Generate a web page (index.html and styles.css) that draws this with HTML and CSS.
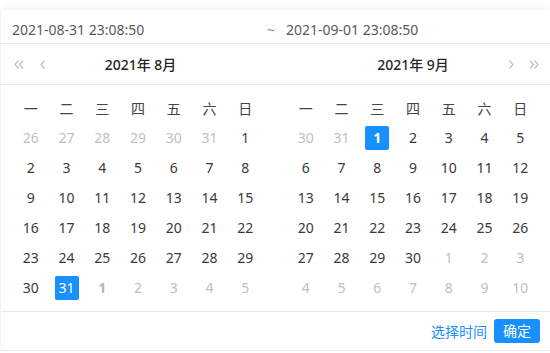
FILE: index.html
```html
<!DOCTYPE html>
<html lang="zh-CN">
<head>
  <meta charset="UTF-8">
  <meta name="viewport" content="width=device-width, initial-scale=1.0">
  <title>Range Picker</title>
  <link rel="stylesheet" href="styles.css">
</head>
<body>
  <div class="picker">
    <div class="range-input">
      <span class="range-value">2021-08-31 23:08:50</span>
      <span class="range-sep">~</span>
      <span class="range-value">2021-09-01 23:08:50</span>
    </div>

    <div class="panels">
      <div class="date-panel">
        <div class="panel-header">
          <button class="nav-btn">
            <svg width="10" height="9" viewBox="0 0 10 9"><path d="M4.5 0.5 L1 4.5 L4.5 8.5 M9 0.5 L5.5 4.5 L9 8.5" fill="none" stroke="#bfbfbf" stroke-width="1.2"/></svg>
          </button>
          <button class="nav-btn">
            <svg width="5" height="9" viewBox="0 0 5 9"><path d="M4.5 0.5 L1 4.5 L4.5 8.5" fill="none" stroke="#bfbfbf" stroke-width="1.2"/></svg>
          </button>
          <div class="panel-title">2021年 8月</div>
          <span class="nav-spacer"></span>
        </div>
        <div class="panel-body" id="left-body"></div>
      </div>

      <div class="date-panel">
        <div class="panel-header">
          <span class="nav-spacer"></span>
          <div class="panel-title">2021年 9月</div>
          <button class="nav-btn">
            <svg width="5" height="9" viewBox="0 0 5 9"><path d="M0.5 0.5 L4 4.5 L0.5 8.5" fill="none" stroke="#bfbfbf" stroke-width="1.2"/></svg>
          </button>
          <button class="nav-btn">
            <svg width="10" height="9" viewBox="0 0 10 9"><path d="M1 0.5 L4.5 4.5 L1 8.5 M5.5 0.5 L9 4.5 L5.5 8.5" fill="none" stroke="#bfbfbf" stroke-width="1.2"/></svg>
          </button>
        </div>
        <div class="panel-body" id="right-body"></div>
      </div>
    </div>

    <div class="panel-footer">
      <a class="time-link" href="#">选择时间</a>
      <button class="ok-btn">确定</button>
    </div>
  </div>

  <script>
    const weekdays = ['一', '二', '三', '四', '五', '六', '日'];

    // prev-month tail, month length, selected day, bold mark in next month
    function buildMonth(prevDays, monthLength, selected, endMark) {
      const days = [];
      prevDays.forEach(d => days.push({ n: d, out: true }));
      for (let d = 1; d <= monthLength; d++) days.push({ n: d, out: false });
      let next = 1;
      while (days.length < 42) days.push({ n: next++, out: true });
      days.forEach((day, i) => {
        if (!day.out && day.n === selected) day.selected = true;
        if (endMark && day.out && i > 20 && day.n === endMark) day.mark = true;
      });
      return days;
    }

    function renderPanel(id, days, boldSelected) {
      const body = document.getElementById(id);
      weekdays.forEach(w => {
        const th = document.createElement('div');
        th.className = 'weekday';
        th.textContent = w;
        body.appendChild(th);
      });
      days.forEach(day => {
        const cell = document.createElement('div');
        cell.className = 'cell';
        if (day.out) cell.classList.add('out');
        if (day.mark) cell.classList.add('mark');
        const inner = document.createElement('span');
        inner.className = 'cell-inner';
        if (day.selected) {
          inner.classList.add('selected');
          if (boldSelected) inner.classList.add('bold');
        }
        inner.textContent = day.n;
        cell.appendChild(inner);
        body.appendChild(cell);
      });
    }

    renderPanel('left-body', buildMonth([26, 27, 28, 29, 30, 31], 31, 31, 1), false);
    renderPanel('right-body', buildMonth([30, 31], 30, 1, null), true);
  </script>
</body>
</html>
```

FILE: styles.css
```css
html, body {
  margin: 0;
  padding: 0;
  background: #ffffff;
  overflow: hidden;
}
body {
  font-family: "Noto Sans", "Noto Sans CJK SC", sans-serif;
  font-size: 14px;
  color: rgba(0, 0, 0, 0.85);
}
.picker {
  width: 551px;
  margin: 10px 0 0 1px;
  background: #fff;
  border-radius: 2px;
  box-shadow: 0 -2px 8px rgba(0, 0, 0, 0.06), 0 1px 2px rgba(0, 0, 0, 0.08);
}
.range-input {
  display: flex;
  align-items: center;
  height: 34px;
  padding: 6px 11px 0;
  box-sizing: border-box;
  border-bottom: 1px solid #e8e8e8;
  line-height: 22px;
  color: #595959;
}
.range-value {
  width: 256px;
}
.range-sep {
  width: 19px;
  color: #8c8c8c;
}
.panels {
  display: flex;
}
.date-panel {
  width: 275px;
}
.panel-header {
  display: flex;
  align-items: center;
  height: 40px;
  padding: 0 10px 0 12px;
  border-bottom: 1px solid #e8e8e8;
}
.date-panel + .date-panel .panel-header {
  padding: 0 11px 0 12px;
}
.nav-btn {
  display: flex;
  align-items: center;
  justify-content: center;
  border: none;
  background: none;
  padding: 0;
  height: 20px;
  min-width: 12px;
  margin-right: 11px;
  cursor: pointer;
}
.date-panel + .date-panel .nav-btn {
  margin-right: 0;
  margin-left: 11px;
}
.nav-spacer {
  width: 44px;
}
.panel-title {
  flex: 1;
  text-align: center;
  font-weight: 500;
  color: #262626;
}
.panel-body {
  display: grid;
  grid-template-columns: repeat(7, 1fr);
  width: 250px;
  padding: 8px 13px 8px 12px;
}
.weekday,
.cell {
  height: 30px;
  display: flex;
  align-items: center;
  justify-content: center;
}
.weekday {
  color: #444;
}
.cell {
  color: #3a3a3a;
}
.cell.out {
  color: #bfbfbf;
}
.cell.mark {
  font-weight: 700;
  color: #b5b5b5;
}
.cell-inner {
  display: inline-block;
  min-width: 24px;
  height: 24px;
  line-height: 24px;
  text-align: center;
  border-radius: 2px;
}
.cell-inner.selected {
  background: #1890ff;
  color: #fff;
}
.cell-inner.bold {
  font-weight: 700;
}
.panel-footer {
  display: flex;
  align-items: center;
  justify-content: flex-end;
  height: 38px;
  padding: 0 12px;
  border-top: 1px solid #e8e8e8;
  border-bottom: 1px solid #e8e8e8;
}
.time-link {
  color: #1890ff;
  text-decoration: none;
  margin-right: 7px;
}
.ok-btn {
  height: 24px;
  padding: 0 9px;
  border: none;
  border-radius: 3px;
  background: #1890ff;
  color: #fff;
  font-family: inherit;
  font-size: 14px;
  line-height: 24px;
  cursor: pointer;
}
```
